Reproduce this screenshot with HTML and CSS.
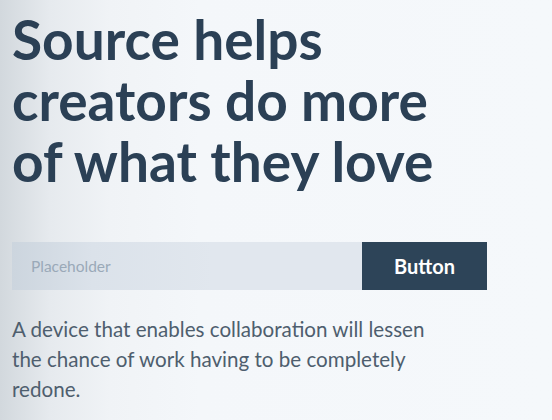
FILE: index.html
```html
<!DOCTYPE html>
<html>
<head>
<meta charset="utf-8">
<link rel="stylesheet" href="styles.css">
</head>
<body>
<main class="hero">
  <h1 class="title">Source helps creators do more of what they love</h1>
  <form class="signup">
    <input class="field" type="text" placeholder="Placeholder">
    <button class="btn" type="button">Button</button>
  </form>
  <p class="lead">A device that enables collaboration will lessen the chance of work having to be completely redone.</p>
</main>
</body>
</html>
```
FILE: styles.css
```css
html, body {
  margin: 0;
  padding: 0;
  height: 100%;
}
body {
  background: linear-gradient(to right, #d2d8dd 0px, #e6eaee 50px, #f0f3f6 110px, #f4f7fa 200px, #f5f8fb 100%);
  font-family: Lato, "Open Sans", sans-serif;
  overflow: hidden;
}
.hero {
  padding: 9px 12px 0 12px;
  display: flex;
  flex-direction: column;
}
.title {
  margin: 0;
  width: 450px;
  font-size: 55px;
  font-weight: 700;
  line-height: 61px;
  color: #2b4055;
}
.signup {
  display: flex;
  margin-top: 50px;
  width: 475px;
  height: 48px;
}
.field {
  flex: 1;
  min-width: 0;
  border: none;
  outline: none;
  background: linear-gradient(to right, #ccd5de, #dbe2ea 80px, #e1e7ee 200px);
  padding: 0 0 0 19px;
  font-family: Lato, sans-serif;
  font-size: 15.5px;
  color: #2b4055;
}
.field::placeholder {
  color: #9aa9b8;
}
.btn {
  width: 125px;
  border: none;
  background: #2d4458;
  color: #ffffff;
  font-family: Lato, sans-serif;
  font-weight: 700;
  font-size: 20px;
  padding: 0;
}
.lead {
  margin: 24px 0 0 0;
  width: 428px;
  font-size: 20.6px;
  line-height: 30px;
  color: #4e5e6e;
}
```
